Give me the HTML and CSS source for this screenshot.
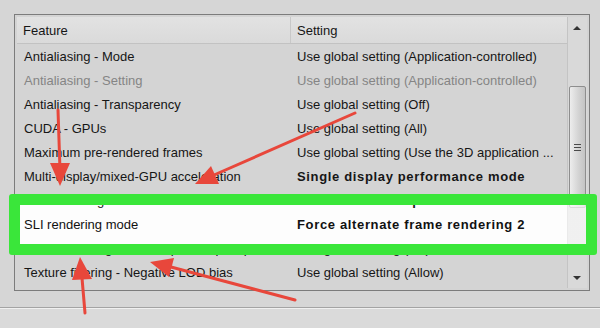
FILE: index.html
```html
<!DOCTYPE html>
<html lang="en">
<head>
  <meta charset="UTF-8" />
  <title>Manage 3D settings</title>
  <link rel="stylesheet" href="styles.css">
</head>
<body>
  <div class="listbox">
    <div class="table">
      <div class="head">
        <div class="c1">Feature</div>
        <div class="c2">Setting</div>
      </div>
      <div class="rows">
        <div class="row"><span class="c1">Antialiasing - Mode</span><span class="c2">Use global setting (Application-controlled)</span></div>
        <div class="row disabled"><span class="c1">Antialiasing - Setting</span><span class="c2">Use global setting (Application-controlled)</span></div>
        <div class="row"><span class="c1">Antialiasing - Transparency</span><span class="c2">Use global setting (Off)</span></div>
        <div class="row"><span class="c1">CUDA - GPUs</span><span class="c2">Use global setting (All)</span></div>
        <div class="row"><span class="c1">Maximum pre-rendered frames</span><span class="c2">Use global setting (Use the 3D application ...</span></div>
        <div class="row"><span class="c1">Multi-display/mixed-GPU acceleration</span><span class="c2 bold">Single display performance mode</span></div>
        <div class="row sel-top"><span class="c1">Power management mode</span><span class="c2 bold">Prefer maximum performance</span></div>
        <div class="row selected"><span class="c1">SLI rendering mode</span><span class="c2 bold">Force alternate frame rendering 2</span></div>
        <div class="row sel-bottom"><span class="c1">Texture filtering - Anisotropic sample optimization</span><span class="c2">Use global setting (Off)</span></div>
        <div class="row"><span class="c1">Texture filtering - Negative LOD bias</span><span class="c2">Use global setting (Allow)</span></div>
      </div>
    </div>
    <div class="scrollbar">
      <div class="sb-btn">
        <svg width="8" height="5" viewBox="0 0 8 5"><path d="M0 5 L4 1 L8 5 Z" fill="#333"/></svg>
      </div>
      <div class="sb-track">
        <div class="thumb">
          <span class="grip"></span><span class="grip"></span><span class="grip"></span>
        </div>
      </div>
      <div class="sb-btn">
        <svg width="8" height="5" viewBox="0 0 8 5"><path d="M0 0 L4 4 L8 0 Z" fill="#333"/></svg>
      </div>
    </div>
  </div>
  <div class="footer"></div>

  <!-- markup drawn over the screenshot -->
  <div class="highlight"></div>
  <svg class="arrows" width="600" height="328" viewBox="0 0 600 328">
    <g stroke="#e8473b" stroke-width="3" stroke-linecap="round" fill="#e8473b">
      <line x1="58" y1="110" x2="60" y2="170" />
      <polygon stroke="none" points="60,186 50,163 70,163" />
      <line x1="355" y1="113" x2="214" y2="175" />
      <polygon stroke="none" points="195,184 219,184 211,166" />
      <line x1="85" y1="313" x2="82" y2="278" />
      <polygon stroke="none" points="80,257 92,279 72,280" />
      <line x1="295" y1="300" x2="171" y2="267" />
      <polygon stroke="none" points="150,262 169,277 174,258" />
    </g>
  </svg>
</body>
</html>
```

FILE: styles.css
```css
body {
  margin: 0;
  width: 600px;
  height: 328px;
  overflow: hidden;
  position: relative;
  background-color: #d6d6d6;
  font-family: "Liberation Sans", Arial, sans-serif;
  font-size: 13px;
  color: #161616;
}

.listbox {
  display: flex;
  box-sizing: border-box;
  width: 576px;
  height: 277px;
  margin: 14px 0 0 14px;
  padding: 2px;
  border: 1px solid #7c7c7c;
  background-color: #d4d4d4;
  overflow: hidden;
}
.table {
  width: 550px;
  overflow: hidden;
}
.head {
  display: flex;
  height: 26px;
  line-height: 27px;
  border-bottom: 1px solid #c2c2c2;
  background: linear-gradient(#e2e2e2, #dadada);
}
.head .c1 {
  width: 274px;
  box-sizing: border-box;
  padding-left: 6px;
  border-right: 1px solid #c8c8c8;
}
.head .c2 {
  padding-left: 6px;
}
.rows {
  padding-top: 1px;
}
.row {
  display: flex;
  height: 24px;
  line-height: 24px;
  white-space: nowrap;
}
.row .c1 {
  width: 274px;
  box-sizing: border-box;
  padding-left: 7px;
  overflow: hidden;
}
.row .c2 {
  padding-left: 6px;
  overflow: hidden;
}
.row .bold {
  font-weight: bold;
  letter-spacing: 0.65px;
}
.row.disabled {
  color: #858585;
}
/* white selection band, only where the green frame shows it */
.row.selected {
  background-color: #fdfdfd;
  color: #111;
}
.row.sel-top {
  background: linear-gradient(transparent 5px, #fdfdfd 5px);
}
.row.sel-bottom {
  background: linear-gradient(#fdfdfd 18px, transparent 18px);
}

/* Scrollbar */
.scrollbar {
  display: flex;
  flex-direction: column;
  width: 20px;
  background-color: #d9d9d9;
  box-shadow: inset 1px 0 0 #c4c4c4;
}
.sb-btn {
  height: 20px;
  display: flex;
  justify-content: center;
  align-items: center;
}
.sb-track {
  flex: 1;
  padding: 49px 1px 0 2px;
}
.thumb {
  height: 120px;
  border: 1px solid #8e8e8e;
  border-radius: 2px;
  background: linear-gradient(to right, #ededed, #d2d2d2 60%, #c4c4c4);
  display: flex;
  flex-direction: column;
  justify-content: center;
  align-items: center;
  gap: 2px;
}
.grip {
  width: 7px;
  height: 1px;
  background-color: #4a4a4a;
}

.footer {
  margin-top: 16px;
  height: 20px;
  border-top: 1px solid #a4a4a4;
  box-shadow: inset 0 1px 0 #f0f0f0;
  background-color: #dadada;
}

/* Annotations */
.highlight {
  position: absolute;
  left: 9px;
  top: 194px;
  width: 588px;
  height: 61px;
  box-sizing: border-box;
  border: 11px solid #3ae63a;
  border-radius: 3px;
  background: linear-gradient(to right, transparent 547px, rgba(250, 250, 250, 0.7) 547px);
}
.arrows {
  position: absolute;
  left: 0;
  top: 0;
  pointer-events: none;
}
```
